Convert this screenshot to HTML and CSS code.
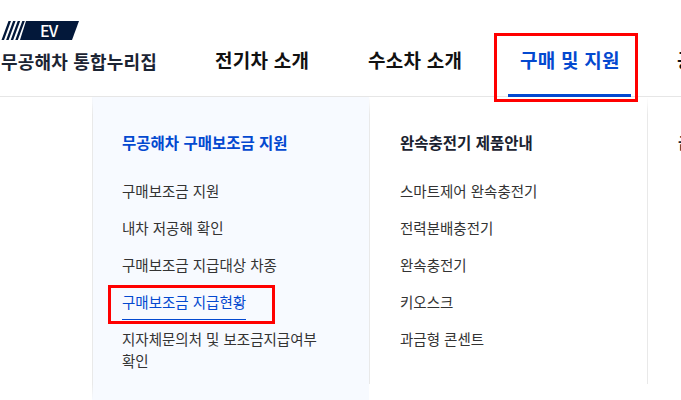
FILE: index.html
```html
<!DOCTYPE html>
<html lang="ko">
<head>
    <meta charset="utf-8" />
    <title>구매 및 지원</title>
    <link rel="stylesheet" href="styles.css">
</head>
<body>
    <div class="page">
        <div class="header">
            <div class="logo">
                <svg class="logo-mark" width="80" height="19" viewBox="0 0 80 19">
                    <path d="M8.500 0H11L4 19H1.500zM13.100 0H15.600L8.600 19H6.100zM17.700 0H20.200L13.200 19H10.700zM22.300 0H24.800L17.800 19H15.300z" fill="#03183a" />
                    <path d="M26 0H79L72 19H20z" fill="#03183a" />
                </svg>
                <span class="logo-ev">EV</span>
                <div class="logo-title">무공해차 통합누리집</div>
            </div>
            <ul class="nav">
                <li class="nav-item n1">전기차 소개</li>
                <li class="nav-item n2">수소차 소개</li>
                <li class="nav-item n3 active">구매 및 지원</li>
                <li class="nav-item n4">공지</li>
            </ul>
        </div>
        <div class="menu">
            <div class="col col-on">
                <h3 class="col-title blue">무공해차 구매보조금 지원</h3>
                <ul class="links">
                    <li>구매보조금 지원</li>
                    <li>내차 저공해 확인</li>
                    <li>구매보조금 지급대상 차종</li>
                    <li class="current"><span>구매보조금 지급현황</span></li>
                    <li>지자체문의처 및 보조금지급여부 확인</li>
                </ul>
            </div>
            <div class="col">
                <h3 class="col-title">완속충전기 제품안내</h3>
                <ul class="links">
                    <li>스마트제어 완속충전기</li>
                    <li>전력분배충전기</li>
                    <li>완속충전기</li>
                    <li>키오스크</li>
                    <li>과금형 콘센트</li>
                </ul>
            </div>
            <div class="col col-last">
                <h3 class="col-title">급속충전기</h3>
            </div>
        </div>
        <div class="mark mark-nav"></div>
        <div class="mark mark-link"></div>
    </div>
</body>
</html>
```

FILE: styles.css
```css
* {
    padding: 0;
    margin: 0;
    box-sizing: border-box;
}

body {
    background: #fff;
    font-family: "Noto Sans CJK KR", "Noto Sans", sans-serif;
    color: #222;
}

ul {
    list-style: none;
}

.page {
    position: relative;
    width: 681px;
    height: 400px;
    overflow: hidden;
}

.header {
    display: flex;
    height: 97px;
    border-bottom: 1px solid #e6e6e6;
}

.logo {
    position: relative;
    flex: none;
    width: 215px;
    padding-top: 21px;
}

.logo-mark {
    display: block;
}

.logo-ev {
    position: absolute;
    top: 20px;
    left: 40px;
    font-size: 16px;
    line-height: 21px;
    font-weight: 500;
    letter-spacing: -0.8px;
    color: #fff;
}

.logo-title {
    margin-top: 8px;
    margin-left: 1px;
    font-size: 18px;
    line-height: 26px;
    font-weight: 700;
    letter-spacing: 0.2px;
    color: #1b2433;
    white-space: nowrap;
}

.nav {
    display: flex;
}

.nav-item {
    font-size: 19px;
    line-height: 26px;
    padding-top: 47px;
    font-weight: 700;
    letter-spacing: 0.25px;
    color: #111;
    white-space: nowrap;
}

.n1 { width: 153px; }
.n2 { width: 152px; }
.n3 { width: 157px; }

.active {
    position: relative;
    color: #0349d0;
}

.active::after {
    content: "";
    position: absolute;
    left: -12px;
    top: 94px;
    width: 123px;
    height: 3px;
    background: #0349d0;
}

.menu {
    display: flex;
    height: 303px;
    margin-left: 92px;
}

.col {
    flex: none;
    width: 278px;
    height: 287px;
    padding: 16px 30px 0;
    border-left: 1px solid #e9e9e9;
    border-top: 18px solid transparent;
}

.col-on {
    width: 277px;
    height: 303px;
    padding-left: 29px;
    border-bottom: 16px solid transparent;
    background: #f7faff;
}

.col-last {
    width: 40px;
}

.col-title {
    font-size: 15.5px;
    line-height: 22px;
    font-weight: 700;
    color: #1a2230;
    margin-bottom: 27px;
    white-space: nowrap;
}

.blue {
    color: #0349d0;
}

.links li {
    font-size: 14.5px;
    line-height: 22px;
    margin-bottom: 15px;
    color: #333;
    word-break: keep-all;
}

.current span {
    display: inline-block;
    margin-bottom: -7px;
    padding-bottom: 6px;
    border-bottom: 1px solid #0349d0;
    color: #0349d0;
}

.mark {
    position: absolute;
    border: 3px solid #f00;
}

.mark-nav {
    left: 494px;
    top: 33px;
    width: 144px;
    height: 69px;
}

.mark-link {
    left: 108px;
    top: 285px;
    width: 167px;
    height: 39px;
}
```
